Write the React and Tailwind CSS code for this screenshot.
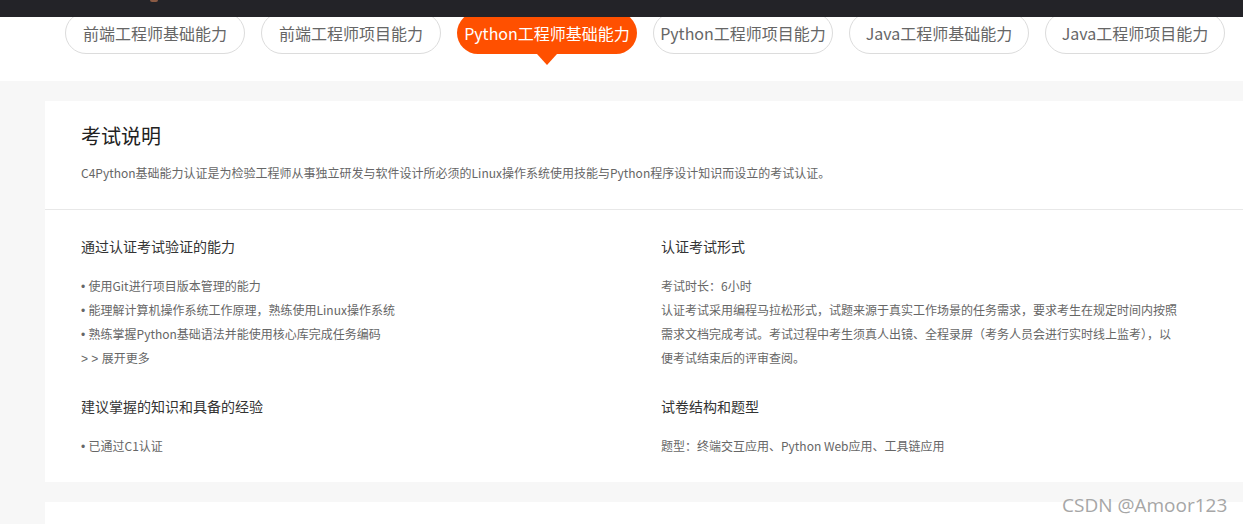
import React from "react";

const tabs = [
  "前端工程师基础能力",
  "前端工程师项目能力",
  "Python工程师基础能力",
  "Python工程师项目能力",
  "Java工程师基础能力",
  "Java工程师项目能力",
];

function Dot() {
  return (
    <span className="inline-block leading-none" style={{ fontFamily: '"Liberation Sans", sans-serif' }}>
      •&nbsp;
    </span>
  );
}

export default function App() {
  return (
    <div
      className="relative w-[1243px] h-[524px] overflow-hidden bg-[#f7f7f7]"
      style={{ fontFamily: '"Noto Sans CJK SC", "Microsoft YaHei", sans-serif' }}
    >
      {/* top dark bar */}
      <div className="h-[17px] bg-[#232328] flex items-start pl-[150px]">
        <div className="w-[8px] h-[2px] rounded-b-full bg-[#8a5a44]" />
      </div>

      {/* tabs band */}
      <div className="h-[64px] bg-white overflow-hidden">
        <div className="flex gap-4 pl-[65px] -mt-[5px]">
          {tabs.map((t, i) =>
            i === 2 ? (
              <div
                key={t}
                className="relative w-[180px] h-[42px] shrink-0 rounded-full bg-[#ff5000] text-white text-[16px] flex items-center justify-center"
              >
                {t}
                <div className="absolute left-1/2 -translate-x-1/2 top-full w-0 h-0 border-l-[10px] border-r-[10px] border-t-[11px] border-l-transparent border-r-transparent border-t-[#ff5000]" />
              </div>
            ) : (
              <div
                key={t}
                className="w-[180px] h-[42px] shrink-0 rounded-full border border-[#dcdcdc] text-[#666] text-[16px] flex items-center justify-center"
              >
                {t}
              </div>
            )
          )}
        </div>
      </div>

      {/* main card */}
      <div className="pl-[45px] pt-[20px]">
        <div className="bg-white">
          <div className="px-[36px] pt-[21px] pb-[26px] border-b border-[#e8e8e8]">
            <h2 className="text-[20px] leading-[28px] text-[#222]">考试说明</h2>
            <p className="mt-[13px] text-[12px] leading-[20px] text-[#666]">
              C4Python基础能力认证是为检验工程师从事独立研发与软件设计所必须的Linux操作系统使用技能与Python程序设计知识而设立的考试认证。
            </p>
          </div>

          <div className="px-[36px] pt-[26px] pb-[24px] grid grid-cols-[580px_540px]">
            <div>
              <h3 className="text-[14px] leading-[20px] text-[#333]">通过认证考试验证的能力</h3>
              <ul className="mt-[18px] text-[12px] leading-[24px] text-[#666]">
                <li className="h-[24px]"><Dot />使用Git进行项目版本管理的能力</li>
                <li className="h-[24px]"><Dot />能理解计算机操作系统工作原理，熟练使用Linux操作系统</li>
                <li className="h-[24px]"><Dot />熟练掌握Python基础语法并能使用核心库完成任务编码</li>
                <li className="h-[24px]">
                  <span className="inline-block leading-none" style={{ fontFamily: '"Liberation Sans", sans-serif' }}>
                    &gt; &gt;&nbsp;
                  </span>
                  展开更多
                </li>
              </ul>
            </div>
            <div>
              <h3 className="text-[14px] leading-[20px] text-[#333]">认证考试形式</h3>
              <div className="mt-[18px] text-[12px] leading-[24px] text-[#666] whitespace-nowrap">
                <p>考试时长：6小时</p>
                <p>
                  认证考试采用编程马拉松形式，试题来源于真实工作场景的任务需求，要求考生在规定时间内按照
                  <br />
                  需求文档完成考试。考试过程中考生须真人出镜、全程录屏（考务人员会进行实时线上监考），以
                  <br />
                  便考试结束后的评审查阅。
                </p>
              </div>
            </div>
            <div className="mt-[26px]">
              <h3 className="text-[14px] leading-[20px] text-[#333]">建议掌握的知识和具备的经验</h3>
              <ul className="mt-[18px] text-[12px] leading-[24px] text-[#666]">
                <li className="h-[24px]"><Dot />已通过C1认证</li>
              </ul>
            </div>
            <div className="mt-[26px]">
              <h3 className="text-[14px] leading-[20px] text-[#333]">试卷结构和题型</h3>
              <p className="mt-[18px] text-[12px] leading-[24px] text-[#666]">
                题型：终端交互应用、Python Web应用、工具链应用
              </p>
            </div>
          </div>
        </div>

        <div className="mt-[20px] h-[40px] bg-white" />
      </div>

      {/* watermark */}
      <div
        className="absolute left-[1062px] top-[492px] text-[19px] leading-[26px] text-[#a6a6a6]"
        style={{ fontFamily: '"Open Sans", sans-serif' }}
      >
        CSDN @Amoor123
      </div>
    </div>
  );
}
